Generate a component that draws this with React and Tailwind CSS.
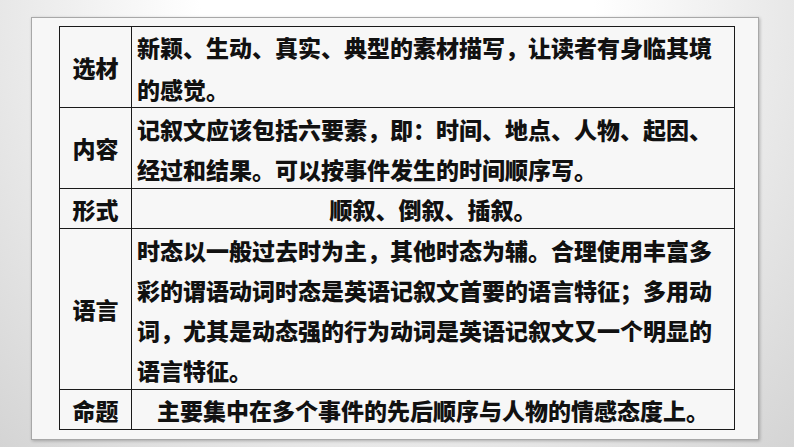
import React from 'react';

const font = "font-['Liberation_Sans','Noto_Sans_CJK_SC',sans-serif]";

function Label({ text, h }) {
    return (
        <div className={`${h} flex items-center justify-center pt-[5px] border-r border-b border-[#1a1a1a]`}>
            {text}
        </div>
    );
}

export default function App() {
    return (
        <div className={`w-[794px] h-[447px] overflow-hidden pt-[17px] pl-[31px] bg-[radial-gradient(ellipse_at_top,#ffffff_35%,#d4d4d4_100%)] ${font}`}>
            <div className="w-[728px] h-[423px] border border-[#a8a8a8] bg-[#f7f7f7] shadow-[1px_1px_3px_rgba(0,0,0,0.25)] pt-[8px] pl-[27px]">
                <div className="w-[676px] border-t border-l border-[#1a1a1a] text-[23px] font-black text-[#111] grid grid-cols-[72px_603px]">
                    {/* 选材 */}
                    <Label text="选材" h="h-[81px]" />
                    <div className="h-[81px] flex flex-col justify-center pt-[5px] pl-[5px] leading-[42px] whitespace-nowrap border-r border-b border-[#1a1a1a]">
                        <div>新颖、生动、真实、典型的素材描写，让读者有身临其境</div>
                        <div>的感觉。</div>
                    </div>
                    {/* 内容 */}
                    <Label text="内容" h="h-[81px]" />
                    <div className="h-[81px] flex flex-col justify-center pt-[5px] pl-[5px] leading-[40px] whitespace-nowrap border-r border-b border-[#1a1a1a]">
                        <div>记叙文应该包括六要素，即：时间、地点、人物、起因、</div>
                        <div>经过和结果。可以按事件发生的时间顺序写。</div>
                    </div>
                    {/* 形式 */}
                    <Label text="形式" h="h-[40px]" />
                    <div className="h-[40px] flex items-center justify-center pt-[5px] whitespace-nowrap border-r border-b border-[#1a1a1a]">
                        顺叙、倒叙、插叙。
                    </div>
                    {/* 语言 */}
                    <Label text="语言" h="h-[161px]" />
                    <div className="h-[161px] flex flex-col justify-center pt-[5px] pl-[5px] leading-[40px] whitespace-nowrap border-r border-b border-[#1a1a1a]">
                        <div>时态以一般过去时为主，其他时态为辅。合理使用丰富多</div>
                        <div>彩的谓语动词时态是英语记叙文首要的语言特征；多用动</div>
                        <div>词，尤其是动态强的行为动词是英语记叙文又一个明显的</div>
                        <div>语言特征。</div>
                    </div>
                    {/* 命题 */}
                    <Label text="命题" h="h-[40px]" />
                    <div className="h-[40px] flex items-center justify-center pt-[5px] whitespace-nowrap border-r border-b border-[#1a1a1a]">
                        主要集中在多个事件的先后顺序与人物的情感态度上。
                    </div>
                </div>
            </div>
        </div>
    );
}
